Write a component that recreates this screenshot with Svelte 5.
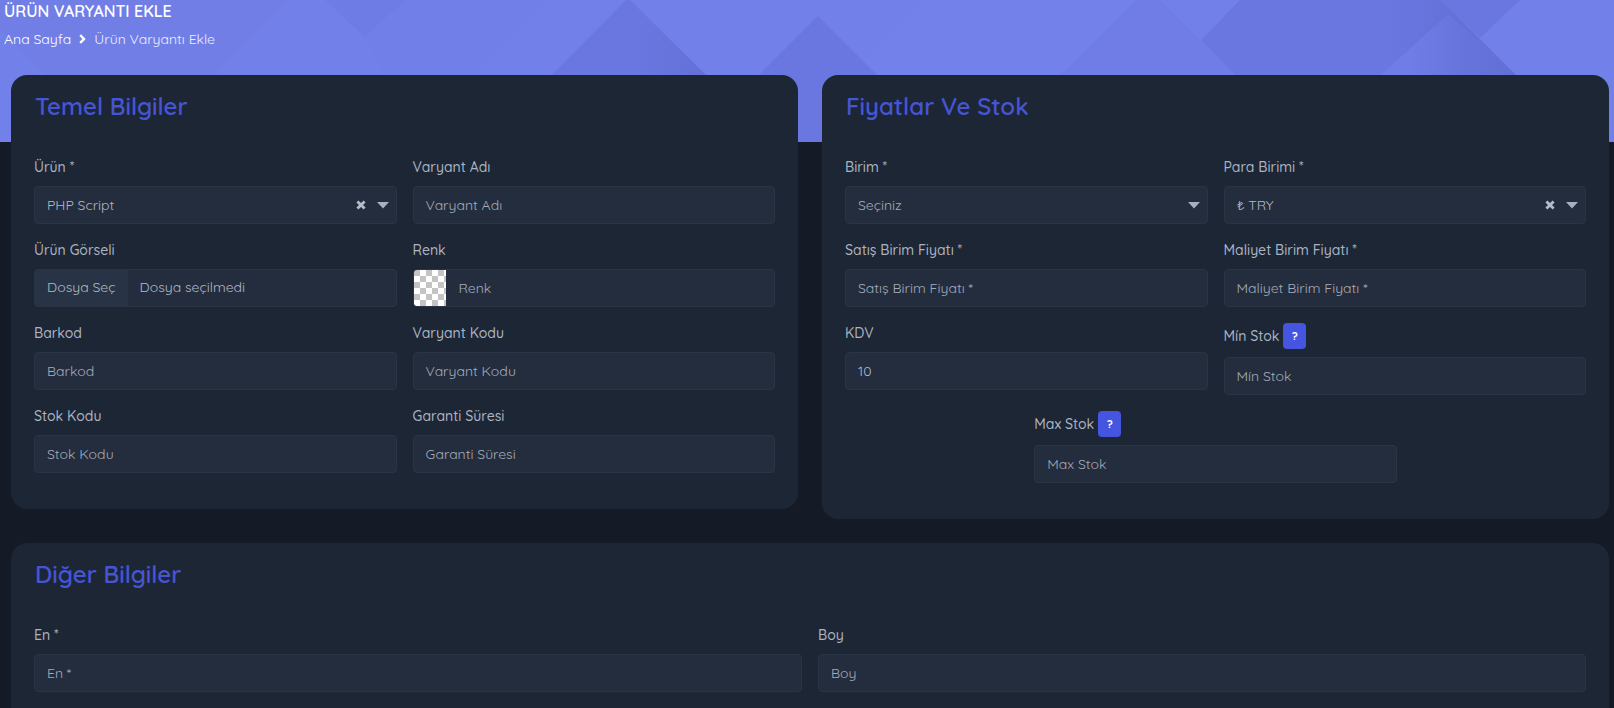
<script>
  // Form state
  let product = $state("php");
  let unit = $state("");
  let currency = $state("try");
  let fileName = $state("");

  const products = [{ value: "php", label: "PHP Script" }];
  const units = [
    { value: "piece", label: "Adet" },
    { value: "kg", label: "Kilogram" }
  ];
  const currencies = [{ value: "try", label: "₺ TRY" }];

  function onFileChange(event) {
    fileName = event.target.files[0]?.name ?? "";
  }
</script>

{#snippet textField(id, label, value = "")}
  <div class="field">
    <label for={id}>{label}</label>
    <input class="control" type="text" {id} placeholder={label} {value} />
  </div>
{/snippet}

{#snippet options(items)}
  <option value="">Seçiniz</option>
  {#each items as item}
    <option value={item.value}>{item.label}</option>
  {/each}
{/snippet}

{#snippet selectIcons(value, clear)}
  {#if value}
    <button type="button" class="clear" aria-label="Temizle" onclick={clear}>
      <svg width="10" height="10" viewBox="0 0 10 10">
        <path d="M1.4 1.4l7.2 7.2M8.6 1.4l-7.2 7.2" stroke="currentColor" stroke-width="2.8" />
      </svg>
    </button>
  {/if}
  <svg class="caret" width="12" height="7" viewBox="0 0 12 7">
    <path d="M0 0h12L6 6.5z" fill="currentColor" />
  </svg>
{/snippet}

{#snippet stockField(id, label, hint)}
  <div class="field">
    <div class="label-row">
      <label for={id}>{label}</label>
      <button type="button" class="hint" title={hint}>?</button>
    </div>
    <input class="control" type="text" {id} placeholder={label} />
  </div>
{/snippet}

<div class="page">
  <svg class="backdrop" viewBox="0 0 1614 142" preserveAspectRatio="xMidYMin slice" aria-hidden="true">
    <defs>
      <linearGradient id="peak" x1="0" y1="0" x2="1" y2="0">
        <stop offset="0.7" stop-color="#6a77e0" />
        <stop offset="1" stop-color="#6370d6" />
      </linearGradient>
      <linearGradient id="fold" x1="0" y1="0" x2="1" y2="0">
        <stop offset="0.2" stop-color="#707de7" />
        <stop offset="0.65" stop-color="#6673da" />
        <stop offset="1" stop-color="#626fd5" />
      </linearGradient>
      <linearGradient id="slab" x1="0" y1="0" x2="1" y2="0">
        <stop offset="0.6" stop-color="#6a77e1" />
        <stop offset="0.8" stop-color="#6471d8" />
      </linearGradient>
    </defs>
    <rect width="1614" height="142" fill="#7280e9" />
    <path d="M0 0h290l-75 75H45L0 30z" fill="#707ee6" />
    <path d="M325 0h80l-40 37z" fill="#6e7ce5" />
    <path d="M405 0h145l-75 75H385l-20-38z" fill="#717fe8" />
    <path d="M922 0h214l-75 75H850z" fill="#7381ea" />
    <path d="M628 -2l78 77v67H485z" fill="url(#peak)" />
    <path d="M818 16l126 126H692z" fill="#6a77e0" />
    <path d="M1136 0h24l75 75h-174z" fill="#707de6" />
    <path d="M1240 0h201l75 75h-281l-34-35z" fill="url(#slab)" />
    <path d="M1448 14l68 61h-135z" fill="url(#fold)" />
    <path d="M1441 0h79l-40 38z" fill="#6a77e0" />
  </svg>

  <header>
    <h1>ÜRÜN VARYANTI EKLE</h1>
    <nav aria-label="Sayfa yolu">
      <a href="#home">Ana Sayfa</a>
      <svg width="7" height="10" viewBox="0 0 7 10">
        <path d="M1.2 1.2L5 5L1.2 8.8" fill="none" stroke="#fff" stroke-width="2.4" />
      </svg>
      <span>Ürün Varyantı Ekle</span>
    </nav>
  </header>

  <main>
    <section class="card">
      <h2>Temel Bilgiler</h2>
      <div class="fields">
        <div class="field">
          <label for="product">Ürün *</label>
          <div class="select-wrap">
            <select class="control" id="product" bind:value={product}>
              {@render options(products)}
            </select>
            {@render selectIcons(product, () => (product = ""))}
          </div>
        </div>
        {@render textField("variant-name", "Varyant Adı")}
        <div class="field">
          <label for="image">Ürün Görseli</label>
          <div class="control file">
            <span class="file-button">Dosya Seç</span>
            <span class="file-name">{fileName || "Dosya seçilmedi"}</span>
            <input type="file" id="image" onchange={onFileChange} />
          </div>
        </div>
        <div class="field">
          <label for="color">Renk</label>
          <div class="control color">
            <button type="button" class="swatch" aria-label="Renk seç"></button>
            <input type="text" id="color" placeholder="Renk" />
          </div>
        </div>
        {@render textField("barcode", "Barkod")}
        {@render textField("variant-code", "Varyant Kodu")}
        {@render textField("stock-code", "Stok Kodu")}
        {@render textField("warranty", "Garanti Süresi")}
      </div>
    </section>

    <section class="card">
      <h2>Fiyatlar Ve Stok</h2>
      <div class="fields">
        <div class="field">
          <label for="unit">Birim *</label>
          <div class="select-wrap">
            <select class="control" class:empty={!unit} id="unit" bind:value={unit}>
              {@render options(units)}
            </select>
            {@render selectIcons(unit, () => (unit = ""))}
          </div>
        </div>
        <div class="field">
          <label for="currency">Para Birimi *</label>
          <div class="select-wrap">
            <select class="control" id="currency" bind:value={currency}>
              {@render options(currencies)}
            </select>
            {@render selectIcons(currency, () => (currency = ""))}
          </div>
        </div>
        {@render textField("sale-price", "Satış Birim Fiyatı *")}
        {@render textField("cost-price", "Maliyet Birim Fiyatı *")}
        {@render textField("vat", "KDV", "10")}
        {@render stockField("min-stock", "Mín Stok", "Minimum stok miktarı")}
        {@render stockField("max-stock", "Max Stok", "Maksimum stok miktarı")}
      </div>
    </section>

    <section class="card wide">
      <h2>Diğer Bilgiler</h2>
      <div class="fields">
        {@render textField("width", "En *")}
        {@render textField("height", "Boy")}
      </div>
    </section>
  </main>
</div>

<style>
  :global(body) {
    margin: 0;
    background: #141a26;
  }

  .page {
    position: relative;
    font-family: Quicksand, Lato, "Open Sans", sans-serif;
    font-size: 14px;
    line-height: 20px;
    color: #acb4c2;
  }

  .page * {
    box-sizing: border-box;
  }

  .backdrop {
    position: absolute;
    top: 0;
    left: 0;
    width: 100%;
    height: 142px;
  }

  header {
    position: relative;
    padding: 0 4px 26px;
  }

  h1 {
    margin: 0 0 7px;
    font-size: 16px;
    font-weight: 600;
    line-height: 22px;
    color: #fff;
  }

  nav {
    display: flex;
    align-items: center;
    gap: 8px;
    color: #eceefd;
  }

  nav a {
    color: #fff;
    text-decoration: none;
  }

  main {
    position: relative;
    display: grid;
    grid-template-columns: 1fr 1fr;
    align-items: start;
    gap: 24px;
    padding: 0 5px 24px 11px;
  }

  .card {
    padding: 16px 23px 20px;
    border-radius: 16px;
    background: #1d2635;
  }

  .wide {
    grid-column: 1 / -1;
  }

  h2 {
    margin: 0 0 36px;
    padding-left: 1px;
    font-size: 24px;
    font-weight: 600;
    line-height: 30px;
    color: #4555d4;
  }

  .fields {
    display: flex;
    flex-wrap: wrap;
    justify-content: center;
    column-gap: 16px;
  }

  .field {
    flex: 0 0 calc(50% - 8px);
    margin-bottom: 16px;
  }

  label {
    display: block;
    margin-bottom: 9px;
    font-weight: 500;
  }

  .label-row {
    display: flex;
    align-items: center;
    gap: 4px;
    margin-bottom: 8px;
  }

  .label-row label {
    margin: 0;
  }

  .hint {
    width: 23px;
    height: 26px;
    padding: 0;
    border: 0;
    border-radius: 4px;
    background: #4555e0;
    color: #fff;
    font: inherit;
    font-size: 11px;
    font-weight: 900;
    cursor: pointer;
  }

  .control {
    display: block;
    width: 100%;
    height: 38px;
    padding: 0 12px;
    border: 1px solid #2b3445;
    border-radius: 4px;
    background: #242d3d;
    color: #b0b8c5;
    font: inherit;
    appearance: none;
    outline: none;
  }

  input.control {
    padding-bottom: 1px;
  }

  .control:focus,
  .control:focus-within {
    border-color: #4555e0;
  }

  input::placeholder {
    color: #a3abba;
    opacity: 1;
  }

  .empty {
    color: #a3abba;
  }

  .select-wrap {
    position: relative;
  }

  .caret {
    position: absolute;
    top: 16px;
    right: 8px;
    color: #a8b0be;
    pointer-events: none;
  }

  .clear {
    position: absolute;
    top: 14px;
    right: 31px;
    display: flex;
    padding: 0;
    border: 0;
    background: none;
    color: #b6bcc8;
    cursor: pointer;
  }

  .file {
    position: relative;
    display: flex;
    padding: 0;
    overflow: hidden;
  }

  .file-button {
    padding: 7px 12px 9px;
    background: #283445;
  }

  .file-name {
    padding: 7px 12px 9px;
  }

  /* The native input covers the row so that a click anywhere opens the dialog */
  .file input {
    position: absolute;
    inset: 0;
    opacity: 0;
    cursor: pointer;
  }

  .color {
    display: flex;
    padding: 0;
    overflow: hidden;
  }

  .swatch {
    width: 32px;
    padding: 0;
    border: 0;
    background: repeating-conic-gradient(#fff 0 25%, #c4c4c4 0 50%) 0 0 / 12px 12px;
    cursor: pointer;
  }

  .color input {
    flex: 1;
    min-width: 0;
    padding: 0 13px 1px;
    border: 0;
    background: none;
    color: inherit;
    font: inherit;
    outline: none;
  }

  @media (max-width: 800px) {
    main {
      grid-template-columns: 1fr;
    }
  }
</style>
